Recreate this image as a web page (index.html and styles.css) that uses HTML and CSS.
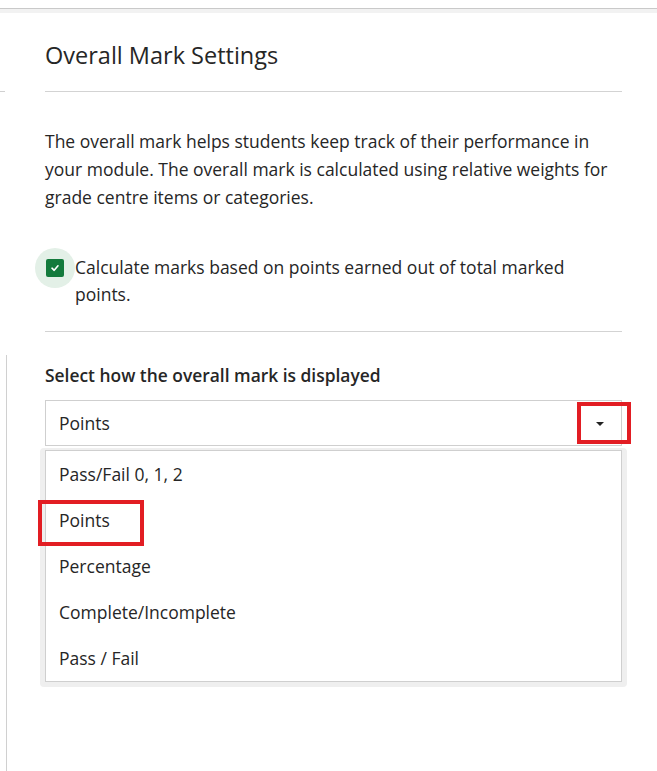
FILE: index.html
```html
<!DOCTYPE html>
<html lang="en">
<head>
<meta charset="utf-8">
<title>Overall Mark Settings</title>
<link rel="stylesheet" href="styles.css">
</head>
<body>
<div class="topbar"></div>
<div class="page">
  <div class="rail">
    <div class="rail-tick"></div>
    <div class="rail-line"></div>
  </div>
  <main class="panel">
    <h1 class="title">Overall Mark Settings</h1>
    <hr class="rule">
    <p class="intro">The overall mark helps students keep track of their performance in your module. The overall mark is calculated using relative weights for grade centre items or categories.</p>
    <label class="check">
      <span class="check-halo"><span class="check-box"><svg width="10" height="10" viewBox="0 0 10 10"><path d="M2 5.2 L4.2 7.3 L8 2.8" fill="none" stroke="#fff" stroke-width="1.6" stroke-linecap="round" stroke-linejoin="round"/></svg></span></span>
      <span class="check-text">Calculate marks based on points earned out of total marked points.</span>
    </label>
    <hr class="rule rule-2">
    <div class="field-label">Select how the overall mark is displayed</div>
    <div class="select">
      <span class="select-value">Points</span>
      <span class="select-caret"><svg width="10" height="6" viewBox="0 0 10 6"><path d="M1 1 L9 1 L5 5 Z" fill="#222"/></svg></span>
      <span class="highlight highlight-caret"></span>
    </div>
    <div class="menu-frame">
      <ul class="menu">
        <li class="menu-item">Pass/Fail 0, 1, 2</li>
        <li class="menu-item">Points<span class="highlight highlight-item"></span></li>
        <li class="menu-item">Percentage</li>
        <li class="menu-item">Complete/Incomplete</li>
        <li class="menu-item">Pass / Fail</li>
      </ul>
    </div>
  </main>
</div>
</body>
</html>
```
FILE: styles.css
```css
html, body {
  margin: 0;
  padding: 0;
  background: #fff;
}
body {
  font-family: "Open Sans", "Noto Sans", sans-serif;
  color: #262626;
  width: 657px;
  height: 771px;
  overflow: hidden;
}
.topbar {
  margin-top: 8px;
  height: 4px;
  border-top: 1px solid #c9c9c9;
  background: #f2f2f2;
}
.page {
  display: flex;
  height: 758px;
}
.rail {
  width: 7px;
  display: flex;
  flex-direction: column;
}
.rail-tick {
  margin-top: 78px;
  width: 5px;
  height: 1px;
  background: #d0d0d0;
}
.rail-line {
  margin-top: 263px;
  flex: 1;
  width: 7px;
  border-right: 1px solid #d0d0d0;
  box-sizing: border-box;
}
.panel {
  margin-left: 38px;
  width: 577px;
  display: flex;
  flex-direction: column;
}
.title {
  margin: 27px 0 0;
  padding-bottom: 1px;
  font-size: 23.5px;
  font-weight: 400;
  line-height: 30px;
  color: #262626;
}
.rule {
  margin: 20px 0 0;
  border: 0;
  height: 1px;
  background: #d3d3d3;
}
.intro {
  margin: 35px 0 0;
  font-size: 17.5px;
  line-height: 28px;
}
.check {
  margin-top: 43px;
  display: flex;
  align-items: flex-start;
}
.check-halo {
  width: 40px;
  height: 40px;
  border-radius: 50%;
  background: #e3f0e7;
  margin: -6px 0 0 -10px;
  display: flex;
  align-items: center;
  justify-content: center;
  flex-shrink: 0;
}
.check-box {
  width: 18px;
  height: 18px;
  border-radius: 2px;
  background: #137a3c;
  display: flex;
  align-items: center;
  justify-content: center;
}
.check-text {
  font-size: 17.5px;
  line-height: 27px;
  margin-left: 0;
}
.rule-2 {
  margin-top: 23px;
}
.field-label {
  margin-top: 32px;
  font-size: 17.4px;
  font-weight: 600;
  line-height: 22px;
}
.select {
  position: relative;
  margin-top: 14px;
  height: 46px;
  border: 1px solid #cfcfcf;
  box-sizing: border-box;
  display: flex;
  align-items: center;
  padding-left: 13px;
  font-size: 17.5px;
}
.select-value {
  flex: 1;
}
.select-caret {
  width: 42px;
  display: flex;
  justify-content: center;
  padding-top: 2px;
}
.highlight {
  position: absolute;
  border: 4px solid #e21d23;
  box-sizing: border-box;
}
.highlight-caret {
  left: 531px;
  top: 1px;
  width: 54px;
  height: 42px;
}
.menu-frame {
  margin: 2px -5px 0 -5px;
  padding: 2px 5px 5px 5px;
  background: #efefef;
  border-radius: 4px;
}
.menu {
  list-style: none;
  margin: 0;
  padding: 0;
  background: #fff;
  border: 1px solid #cfcfcf;
}
.menu-item {
  position: relative;
  height: 46px;
  line-height: 46px;
  padding-left: 13px;
  font-size: 17.5px;
}
.highlight-item {
  left: -8px;
  top: 3px;
  width: 106px;
  height: 46px;
}
```
